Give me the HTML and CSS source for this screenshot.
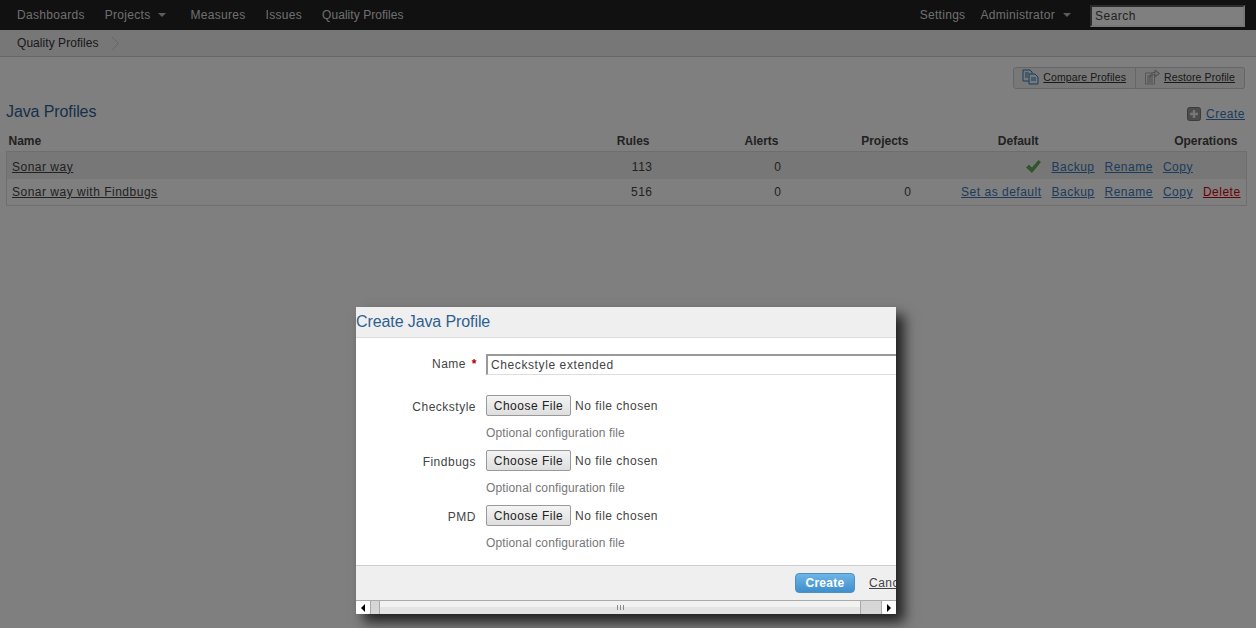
FILE: index.html
```html
<!DOCTYPE html>
<html lang="en">
  <head>
    <meta charset="UTF-8" />
    <title>Quality Profiles</title>
    <link rel="stylesheet" href="styles.css">
  </head>
  <body>
    <!-- top navigation -->
    <nav class="topbar">
      <ul class="menu">
        <li><a>Dashboards</a></li>
        <li class="has-arrow"><a>Projects</a><span class="arrow"></span></li>
        <li><a>Measures</a></li>
        <li><a>Issues</a></li>
        <li class="tight"><a>Quality Profiles</a></li>
      </ul>
      <ul class="menu menu-right">
        <li><a>Settings</a></li>
        <li class="has-arrow"><a>Administrator</a><span class="arrow"></span></li>
      </ul>
      <input class="search" type="text" placeholder="Search" />
    </nav>

    <div class="crumbs">
      <span class="tight">Quality Profiles</span>
      <svg class="crumb-sep" width="8" height="15" viewBox="0 0 8 15">
        <path d="M0.500 0.500 L7.500 7.500 L0.500 14.500" fill="none" stroke="#ccc" stroke-width="1" />
      </svg>
    </div>

    <main class="content">
      <div class="tools">
        <a class="tool">
          <svg width="17" height="16" viewBox="0 0 17 16">
            <path d="M1 1h7l2 2v9H1z" fill="#e8f2fa" stroke="#2f7ab5" />
            <path d="M7 5h6l3 3v7H7z" fill="#e8f2fa" stroke="#2f7ab5" />
            <path d="M3 4h4M3 6h3M3 8h3M9 9h5M9 11h5" stroke="#2f7ab5" stroke-width="1" />
          </svg>
          <span>Compare Profiles</span>
        </a>
        <a class="tool">
          <svg width="16" height="16" viewBox="0 0 16 16">
            <path d="M1.500 4h9v11h-9z" fill="#f4f4f4" stroke="#aaa" />
            <path d="M3 7h6M3 9h6M3 11h6M3 13h6" stroke="#999" />
            <path d="M6 8 C6 4 9 3.500 11 3.500 V1 L15.500 4.500 L11 8 V5.500 C9 5.500 7 6 6 8z" fill="#ddd" stroke="#999" />
          </svg>
          <span>Restore Profile</span>
        </a>
      </div>

      <div class="title-row">
        <h2>Java Profiles</h2>
        <div class="create-link">
          <svg width="14" height="14" viewBox="0 0 14 14">
            <rect x="0.500" y="0.500" width="13" height="13" rx="2" fill="#999" stroke="#777" />
            <path d="M7 3v8M3 7h8" stroke="#eee" stroke-width="2.400" />
          </svg>
          <a class="link">Create</a>
        </div>
      </div>

      <table class="profiles">
        <colgroup>
          <col class="col-name" /><col class="col-rules" /><col class="col-alerts" /><col class="col-num" /><col class="col-num" /><col class="col-ops" />
        </colgroup>
        <thead>
          <tr>
            <th class="left">Name</th>
            <th>Rules</th>
            <th>Alerts</th>
            <th>Projects</th>
            <th>Default</th>
            <th class="th-ops">Operations</th>
          </tr>
        </thead>
        <tbody>
          <tr class="odd">
            <td class="left"><a class="plain">Sonar way</a></td>
            <td>113</td>
            <td>0</td>
            <td></td>
            <td>
              <svg class="check" width="15" height="13" viewBox="0 0 15 13">
                <path d="M0.500 7.500 L3 5 L6 8 L12.500 0.500 L14.500 2 L6 12.500z" fill="#5fae57" stroke="#4a9444" stroke-width="0.600" />
              </svg>
            </td>
            <td class="ops"><a class="link">Backup</a><a class="link">Rename</a><a class="link">Copy</a></td>
          </tr>
          <tr>
            <td class="left"><a class="plain">Sonar way with Findbugs</a></td>
            <td>516</td>
            <td>0</td>
            <td>0</td>
            <td><a class="link">Set as default</a></td>
            <td class="ops"><a class="link">Backup</a><a class="link">Rename</a><a class="link">Copy</a><a class="link danger">Delete</a></td>
          </tr>
        </tbody>
      </table>
    </main>

    <div class="overlay"></div>

    <!-- modal -->
    <div class="modal">
      <div class="modal-clip">
        <h2 class="modal-head">Create Java Profile</h2>
        <form class="modal-body">
          <div class="field field-name">
            <label>Name <em>*</em></label>
            <input class="name-input" type="text" value="Checkstyle extended" />
          </div>
          <div class="field">
            <label>Checkstyle</label>
            <div class="file-col">
              <input type="file" />
              <p>Optional configuration file</p>
            </div>
          </div>
          <div class="field">
            <label>Findbugs</label>
            <div class="file-col">
              <input type="file" />
              <p>Optional configuration file</p>
            </div>
          </div>
          <div class="field">
            <label>PMD</label>
            <div class="file-col">
              <input type="file" />
              <p>Optional configuration file</p>
            </div>
          </div>
        </form>
        <div class="modal-foot">
          <button class="btn-create" type="button">Create</button>
          <a class="plain cancel">Cancel</a>
        </div>
      </div>
      <div class="hscroll">
        <span class="sb-btn"><i class="tri-left"></i></span>
        <span class="sb-track-end"></span>
        <span class="sb-thumb"><i></i></span>
        <span class="sb-track-end wide"></span>
        <span class="sb-btn"><i class="tri-right"></i></span>
      </div>
    </div>
  </body>
</html>
```

FILE: styles.css
```css
html, body {
  height: 100%;
}
body {
  margin: 0;
  height: 628px;
  overflow: hidden;
  background-color: #fff;
  color: #444;
  font-family: "Liberation Sans", Arial, sans-serif;
  font-size: 12px;
  letter-spacing: 0.5px;
}
ul {
  list-style: none;
  margin: 0;
  padding: 0;
}
h2 {
  margin: 0;
  font-weight: normal;
}
.tight {
  letter-spacing: 0.05px;
}

/* top bar */
.topbar {
  display: flex;
  align-items: center;
  height: 30px;
  padding: 0 11px 0 17px;
  background-color: #222;
  color: #ddd;
  letter-spacing: 0.3px;
}
.menu {
  display: flex;
  align-items: center;
  gap: 20px;
}
.menu-right {
  margin-left: auto;
  gap: 15px;
}
.has-arrow {
  display: flex;
  align-items: center;
  padding-right: 4px;
}
.arrow {
  width: 0;
  height: 0;
  margin-left: 8px;
  border-left: 4px solid transparent;
  border-right: 4px solid transparent;
  border-top: 4px solid #bbb;
}
.search {
  box-sizing: border-box;
  width: 155px;
  height: 22px;
  margin: 1px 0 0 15px;
  padding: 1px 3px;
  border-width: 2px;
  border-style: inset;
  border-color: #aaa #eee #eee #aaa;
  background-color: #fff;
  font: inherit;
  letter-spacing: 0.5px;
}
.search::placeholder {
  color: #444;
  opacity: 1;
}

/* breadcrumb */
.crumbs {
  display: flex;
  align-items: center;
  gap: 12px;
  height: 26px;
  padding-left: 17px;
  background-color: #efefef;
  border-bottom: 1px solid #ccc;
  color: #333;
}

.content {
  padding: 10px 0 0 6px;
}
.tools {
  display: flex;
  justify-content: flex-end;
  height: 22px;
  margin-right: 11px;
}
.tool {
  display: flex;
  align-items: center;
  gap: 4px;
  padding: 0 9px 2px 8px;
  border: 1px solid #ccc;
  background-color: #f0f0f0;
  font-size: 10.500px;
  letter-spacing: 0.1px;
  color: #333;
}
.tool span {
  text-decoration: underline;
}
.tool:first-child {
  border-radius: 3px 0 0 3px;
}
.tool:last-child {
  border-left: 0;
  border-radius: 0 3px 3px 0;
}

.title-row {
  display: flex;
  justify-content: space-between;
  align-items: center;
  margin: 13px 11px 0 0;
  height: 20px;
}
.title-row h2 {
  font-size: 16px;
  letter-spacing: -0.1px;
  color: #2f5f92;
}
.create-link {
  display: flex;
  align-items: center;
  gap: 5px;
  margin-top: 3px;
}
.link {
  color: #3a77b8;
  text-decoration: underline;
}
.plain {
  color: #444;
  text-decoration: underline;
}
.danger {
  color: #d4000c;
}

/* profile table */
.profiles {
  width: 1240px;
  margin-top: 9px;
  table-layout: fixed;
  border-collapse: collapse;
}
.col-name {
  width: 554px;
}
.col-rules {
  width: 95px;
}
.col-alerts {
  width: 129px;
}
.col-num {
  width: 130px;
}
.col-ops {
  width: 202px;
}
.profiles th {
  height: 20px;
  padding: 0 6px 0 0;
  text-align: right;
  color: #444;
  letter-spacing: 0;
}
.profiles th.left {
  padding-left: 2px;
  text-align: left;
}
.profiles th.th-ops {
  padding-right: 9px;
}
.profiles tbody {
  border: 1px solid #ddd;
}
.profiles td {
  height: 26px;
  padding: 0 3px 0 0;
  text-align: right;
  white-space: nowrap;
}
.profiles .odd td {
  height: 25px;
  padding-top: 2px;
}
.profiles td.left {
  padding-left: 5px;
  text-align: left;
}
.profiles td.ops {
  padding-left: 7px;
  padding-right: 0;
  text-align: left;
}
.ops a {
  margin-right: 10px;
}
.odd {
  background-color: #eee;
}
.check {
  display: block;
  margin-left: auto;
  margin-right: 1px;
}

.overlay {
  position: absolute;
  inset: 0;
  background-color: rgba(0, 0, 0, 0.5);
}

/* modal */
.modal {
  position: absolute;
  left: 356px;
  top: 307px;
  width: 540px;
  background-color: #fff;
  box-shadow: 8px 8px 12px rgba(0, 0, 0, 0.75);
}
.modal-clip {
  overflow: hidden;
}
.modal-head {
  box-sizing: border-box;
  height: 31px;
  line-height: 29px;
  background-color: #efefef;
  border-bottom: 1px solid #ddd;
  color: #2f5f92;
  font-size: 16px;
  letter-spacing: -0.1px;
}
.modal-body {
  height: 227px;
  display: flex;
  flex-direction: column;
}
.field {
  display: flex;
  height: 55px;
}
.field-name {
  height: 57px;
  padding-top: 16px;
  box-sizing: border-box;
}
.field label {
  box-sizing: border-box;
  flex: none;
  width: 130px;
  padding: 5px 10px 0 0;
  text-align: right;
}
.field-name label {
  padding: 3px 9px 0 0;
}
.field em {
  margin-left: 2px;
  color: #a00;
  font-style: normal;
  font-weight: bold;
}
.name-input {
  box-sizing: border-box;
  flex: none;
  width: 600px;
  height: 21px;
  padding: 1px 3px;
  border-width: 2px 0 1px 2px;
  border-style: solid;
  border-color: #999 #ddd #ddd #999;
  font: inherit;
  letter-spacing: 0.6px;
  color: #444;
}
.file-col input {
  display: block;
  width: 300px;
  height: 21px;
  font: inherit;
  letter-spacing: inherit;
  color: #444;
}
.file-col input::file-selector-button {
  height: 21px;
  width: 85px;
  margin-right: 4px;
  padding: 0;
  border: 1px solid #999;
  border-radius: 2px;
  background: linear-gradient(#f4f4f4, #dedede);
  font: inherit;
  letter-spacing: inherit;
  color: #222;
}
.file-col p {
  margin: 10px 0 0;
  color: #777;
  letter-spacing: 0.13px;
}
.modal-foot {
  box-sizing: border-box;
  display: flex;
  align-items: center;
  height: 35px;
  padding-left: 439px;
  background-color: #efefef;
  border-top: 1px solid #ccc;
  white-space: nowrap;
}
.btn-create {
  flex: none;
  width: 60px;
  height: 20px;
  padding: 0;
  border: 1px solid #4d8fc4;
  border-radius: 4px;
  background: linear-gradient(#6eb4e6, #3f8fcb);
  color: #fff;
  font: bold 12px "Liberation Sans", Arial, sans-serif;
  letter-spacing: 0.3px;
}
.cancel {
  margin-left: 14px;
}

/* horizontal scrollbar of the dialog */
.hscroll {
  display: flex;
  box-sizing: border-box;
  height: 14px;
  border-top: 1px solid #aaa;
  background: linear-gradient(#f2f2f2 50%, #e4e4e4 50%);
}
.sb-btn {
  flex: none;
  display: flex;
  align-items: center;
  justify-content: center;
  width: 14px;
  border-radius: 2px;
  background-color: #fff;
}
.sb-track-end {
  flex: none;
  width: 8px;
  background-color: #d6d6d6;
  border-left: 1px solid #aaa;
}
.sb-track-end.wide {
  width: 20px;
  border-left: 1px solid #aaa;
  border-right: 1px solid #aaa;
}
.sb-thumb {
  flex: 1;
  display: flex;
  align-items: center;
  justify-content: center;
  border-left: 1px solid #aaa;
}
.sb-thumb i {
  width: 7px;
  height: 5px;
  background: repeating-linear-gradient(90deg, #888 0 1px, transparent 1px 3px);
}
.tri-left, .tri-right {
  width: 0;
  height: 0;
  border-top: 4px solid transparent;
  border-bottom: 4px solid transparent;
}
.tri-left {
  border-right: 4px solid #000;
}
.tri-right {
  border-left: 4px solid #000;
}
```
